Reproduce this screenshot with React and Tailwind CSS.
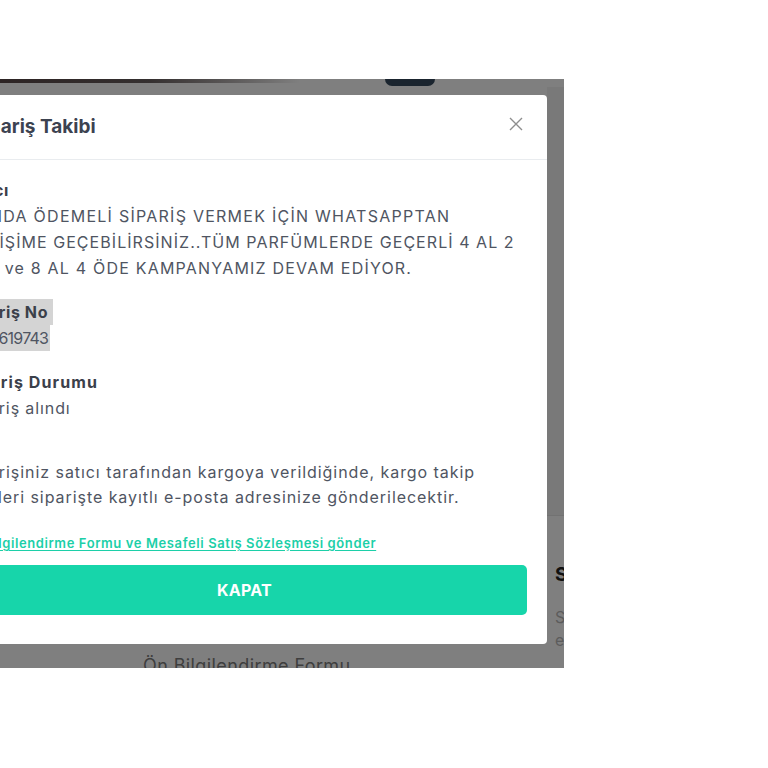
import React from "react";

const font = { fontFamily: "Inter, 'Noto Sans', sans-serif" };

export default function App() {
  return (
    <div className="min-h-[768px] w-[768px] bg-white" style={font}>
      <div className="pt-[79px]">
        <div className="relative h-[589px] w-[564px] overflow-hidden bg-white">
          {/* page behind the overlay */}
          <div className="flex h-full flex-col">
            <div className="flex h-[8px] items-start">
              <div className="h-[4px] w-[300px] bg-gradient-to-r from-[#5a4848] via-[#6a6060] to-white" />
              <div className="ml-[85px] h-[7px] w-[50px] rounded-b-[14px] bg-[#34495c]" />
            </div>
            <div className="flex flex-1">
              <div className="flex-1" />
              <div className="flex w-[17px] flex-col">
                <div className="h-[428px] bg-[#f3f3f3]" />
                <div className="flex flex-1 flex-col border-t border-[#e5e5e5] bg-white pl-[8px]">
                  <div className="mt-[48px] text-[19px] font-bold leading-[22px] text-[#222]">S</div>
                  <div className="mt-[20px] text-[16px] leading-[23px] text-[#b8b8b8]">S</div>
                  <div className="text-[16px] leading-[23px] text-[#b8b8b8]">e</div>
                </div>
              </div>
            </div>
            <div className="flex h-[14px] items-start overflow-visible">
              <div className="ml-[143px] mt-[1px] text-[18px] leading-[22px] tracking-[0.4px] text-[#7c7c7c] whitespace-nowrap">
                Ön Bilgilendirme Formu
              </div>
            </div>
          </div>

          {/* overlay */}
          <div className="absolute inset-0 bg-black/50" />

          {/* modal */}
          <div className="absolute inset-0 flex items-start">
            <div className="ml-[-58px] mt-[16px] w-[605px] shrink-0 rounded-[4px] bg-white">
              <div className="flex h-[65px] items-center border-b border-[#e9ecef] pl-[29px] pr-[24px]">
                <div className="flex-1 text-[19px] font-bold leading-[24px] text-[#3c4250]">
                  Sipariş Takibi
                </div>
                <svg width="14" height="14" viewBox="0 0 14 14" className="-mt-[6px]">
                  <path d="M1 1 L13 13 M13 1 L1 13" stroke="#8e8e8e" strokeWidth="1.4" fill="none" />
                </svg>
              </div>

              <div className="px-[20px] pt-[17px] pb-[29px] text-[16px] leading-[26px] text-[#4f5562]">
                <div className="font-bold tracking-[0.5px] text-[#3b404a]">Satıcı</div>
                <div className="whitespace-nowrap">
                  <div className="tracking-[1.25px]">KAPIDA ÖDEMELİ SİPARİŞ VERMEK İÇİN WHATSAPPTAN</div>
                  <div className="tracking-[1.05px]">İLETİŞİME GEÇEBİLİRSİNİZ..TÜM PARFÜMLERDE GEÇERLİ 4 AL 2</div>
                  <div className="tracking-[1.2px]">ÖDE ve 8 AL 4 ÖDE KAMPANYAMIZ DEVAM EDİYOR.</div>
                </div>

                <div className="mt-[18px]">
                  <div>
                    <span className="inline-block bg-[#d4d4d4] pr-[5px] font-bold tracking-[0.6px] text-[#3b404a]">
                      Sipariş No
                    </span>
                  </div>
                  <div>
                    <span className="inline-block bg-[#d4d4d4] pr-[2px] tracking-[-0.8px]">2024619743</span>
                  </div>
                </div>

                <div className="mt-[18px]">
                  <div className="font-bold tracking-[1.1px] text-[#3b404a]">Sipariş Durumu</div>
                  <div className="tracking-[0.9px]">Sipariş alındı</div>
                </div>

                <div className="mt-[38px] whitespace-nowrap tracking-[0.94px]">
                  <div>Siparişiniz satıcı tarafından kargoya verildiğinde, kargo takip</div>
                  <div className="-mt-[1px]">bilgileri siparişte kayıtlı e-posta adresinize gönderilecektir.</div>
                </div>

                <div className="mt-[24px] whitespace-nowrap text-[13px] font-semibold leading-[18px] tracking-[0.6px] text-[#1ccfa8] underline underline-offset-[2px]">
                  Ön Bilgilendirme Formu ve Mesafeli Satış Sözleşmesi gönder
                </div>

                <button className="mt-[13px] flex h-[50px] w-full items-center justify-center rounded-[5px] bg-[#17d5aa] text-[16px] font-bold tracking-[0.3px] text-white">
                  KAPAT
                </button>
              </div>
            </div>
          </div>
        </div>
      </div>
    </div>
  );
}
